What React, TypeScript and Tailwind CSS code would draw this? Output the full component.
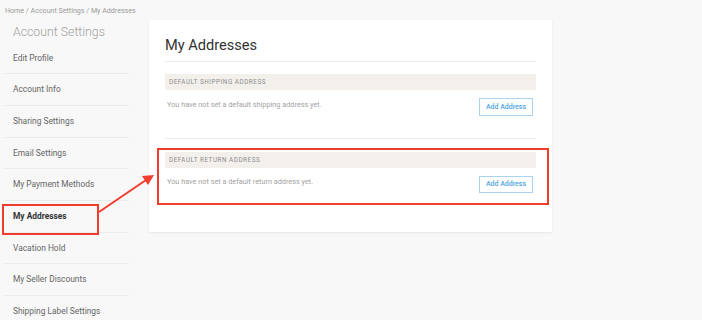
const menu = [
  'Edit Profile',
  'Account Info',
  'Sharing Settings',
  'Email Settings',
  'My Payment Methods',
  'My Addresses',
  'Vacation Hold',
  'My Seller Discounts',
  'Shipping Label Settings',
];

function AddressSection({ title, text }: { title: string; text: string }) {
  return (
    <div>
      <div className="h-[16px] bg-[#f3f0ec] pl-[4px] text-[6.3px] leading-[16px] tracking-[0.55px] text-[#8c8c8c] uppercase">
        {title}
      </div>
      <div className="flex justify-between items-start pt-[8px]">
        <p className="mt-[2.5px] pl-[2px] text-[7.3px] leading-[8px] text-[#a3a3a3]">{text}</p>
        <button className="mr-[3px] h-[17.5px] w-[54px] border border-[#a9d3ef] bg-white text-[7px] font-medium text-[#4ea4de]">
          Add Address
        </button>
      </div>
    </div>
  );
}

export default function App() {
  return (
    <div className="relative w-[702px] h-[320px] overflow-hidden bg-[#f8f8f8] font-['Roboto',sans-serif]">
      <div className="h-[20px] pt-[7px] pl-[5px] text-[7.1px] leading-[8px] text-[#9a9a9a]">
        Home / Account Settings / My Addresses
      </div>

      <div className="flex">
        <aside className="ml-[4px] w-[125px]">
          <h2 className="h-[22.5px] pt-[2px] pl-[9px] text-[12.3px] font-light leading-[20px] text-[#a0a0a0]">
            Account Settings
          </h2>
          {menu.map((item) => (
            <div
              key={item}
              className={
                'h-[31.7px] border-b border-[#ececec] pl-[9px] flex items-center text-[8.4px] ' +
                (item === 'My Addresses' ? 'font-bold text-[#333]' : 'text-[#666]')
              }
            >
              {item}
            </div>
          ))}
        </aside>

        <main className="ml-[20px] w-[403px] h-[212px] bg-white px-[16px] shadow-[0_1px_2px_rgba(0,0,0,0.08)]">
          <div className="h-[42px] border-b border-[#ededed] pt-[16px]">
            <h1 className="text-[14.6px] leading-[18px] text-[#333]">My Addresses</h1>
          </div>
          <div className="mt-[12px]">
            <AddressSection
              title="Default Shipping Address"
              text="You have not set a default shipping address yet."
            />
          </div>
          <div className="mt-[22px] h-px bg-[#ededed]" />
          <div className="mt-[13px]">
            <AddressSection
              title="Default Return Address"
              text="You have not set a default return address yet."
            />
          </div>
        </main>
      </div>

      {/* annotations */}
      <div className="absolute left-[157px] top-[148px] w-[392px] h-[57px] border-2 border-[#f23d2e]" />
      <div className="absolute left-[2px] top-[204px] w-[97px] h-[31px] border-2 border-[#f23d2e]" />
      <svg className="absolute left-0 top-0" width="702" height="320">
        <line x1="99" y1="212" x2="146" y2="180" stroke="#f23d2e" strokeWidth="2" />
        <polygon points="154,175 142,176 148,185" fill="#f23d2e" />
      </svg>
    </div>
  );
}
